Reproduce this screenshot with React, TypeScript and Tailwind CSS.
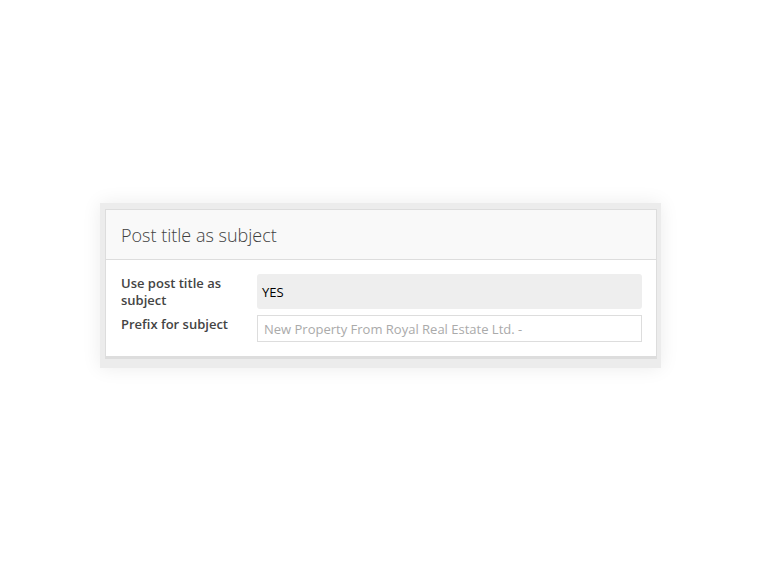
export default function App() {
  return (
    <div className="flex h-[572px] w-full items-center justify-center bg-white pb-[1px] pr-[2px] font-['Open_Sans',sans-serif]">
      {/* outer frame */}
      <div className="w-[561px] bg-[#ececec] pb-[9px] pl-[5px] pr-[4px] pt-[6px] shadow-[0_0_18px_rgba(0,0,0,0.08)]">
        <div className="border border-b-[3px] border-[#dddddd] bg-white">
          {/* header */}
          <div className="flex h-[50px] items-center border-b border-[#dddddd] bg-[#f9f9f9] px-[15px]">
            <h3 className="text-[18px] font-light leading-none text-[#3f3f3f]">Post title as subject</h3>
          </div>

          {/* body */}
          <div className="flex flex-col gap-[6px] pb-[14px] pl-[15px] pr-[14px] pt-[14px]">
            <div className="flex items-start">
              <label className="w-[121px] pt-[1px] text-[13px] font-semibold leading-[17px] text-[#444444]">
                Use post title as subject
              </label>
              <div className="ml-[15px] flex h-[35px] flex-1 items-center rounded-[3px] bg-[#eeeeee] px-[5px] pt-[2px] text-[13px] text-black">
                YES
              </div>
            </div>
            <div className="flex items-start">
              <label className="w-[121px] pt-[1px] text-[13px] font-semibold leading-[17px] text-[#444444]">
                Prefix for subject
              </label>
              <input
                className="ml-[15px] h-[27px] flex-1 border border-[#dddddd] px-[6px] text-[13px] text-[#555555] outline-none placeholder:text-[#aaaaaa]"
                placeholder="New Property From Royal Real Estate Ltd. -"
              />
            </div>
          </div>
        </div>
      </div>
    </div>
  )
}
